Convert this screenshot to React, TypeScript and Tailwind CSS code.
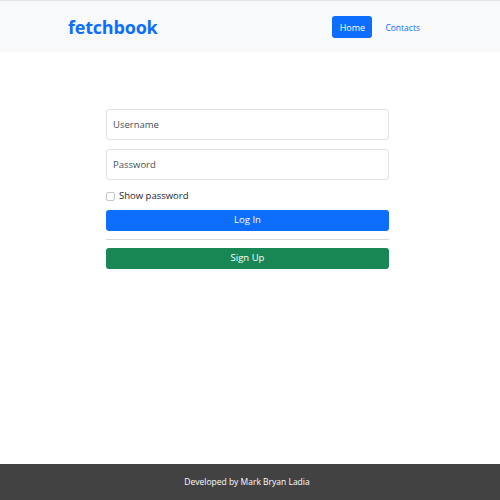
import React, { useState } from "react";

const App = () => {
  const [showPassword, setShowPassword] = useState(false);

  return (
    <div
      className="w-[500px] h-[500px] flex flex-col bg-white text-[#212529]"
      style={{ fontFamily: '"Open Sans", "Noto Sans", sans-serif' }}
    >
      <nav className="h-[52px] bg-[#f8f9fa] border-t border-[#e4e4e4] flex items-center justify-between pl-[68px] pr-[80px]">
        <span className="text-[18px] font-bold text-[#0d6efd] tracking-[-0.2px] leading-none">
          fetchbook
        </span>
        <div className="flex items-center gap-[13px]">
          <button
            type="button"
            className="h-[22px] w-[40px] pt-[2px] rounded-[3px] bg-[#0d6efd] text-white text-[9px] flex items-center justify-center"
          >
            Home
          </button>
          <a href="#" className="h-[22px] pt-[3px] flex items-center text-[8.5px] text-[#0d6efd]">
            Contacts
          </a>
        </div>
      </nav>

      <main className="flex-1 flex pl-[106px] pt-[57px]">
        <form className="w-[283px] flex flex-col">
          <input
            type="text"
            placeholder="Username"
            className="h-[31px] w-full border border-[#dee2e6] rounded-[3px] px-[6px] text-[9.5px] placeholder:text-[#495057] outline-none"
          />
          <input
            type={showPassword ? "text" : "password"}
            placeholder="Password"
            className="h-[31px] w-full mt-[9px] border border-[#dee2e6] rounded-[3px] px-[6px] text-[9.5px] placeholder:text-[#495057] outline-none"
          />
          <label className="h-[12px] flex items-center gap-[4px] mt-[10px] text-[9.5px] text-[#212529]">
            <input
              type="checkbox"
              checked={showPassword}
              onChange={() => setShowPassword(!showPassword)}
              className="w-[9px] h-[9px] appearance-none border border-[#c4c8cc] rounded-[2px] bg-white"
            />
            Show password
          </label>
          <button
            type="button"
            className="h-[21px] w-full mt-[8px] rounded-[3px] bg-[#0d6efd] text-white text-[9.5px]"
          >
            Log In
          </button>
          <hr className="mt-[8px] border-t border-[#d9d9d9]" />
          <button
            type="button"
            className="h-[21px] w-full mt-[8px] rounded-[3px] bg-[#198754] text-white text-[9.5px]"
          >
            Sign Up
          </button>
        </form>
      </main>

      <footer className="h-[36px] bg-[#424242] flex items-center justify-center pr-[6px]">
        <span className="text-[8.5px] text-white">Developed by Mark Bryan Ladia</span>
      </footer>
    </div>
  );
};

export default App;
